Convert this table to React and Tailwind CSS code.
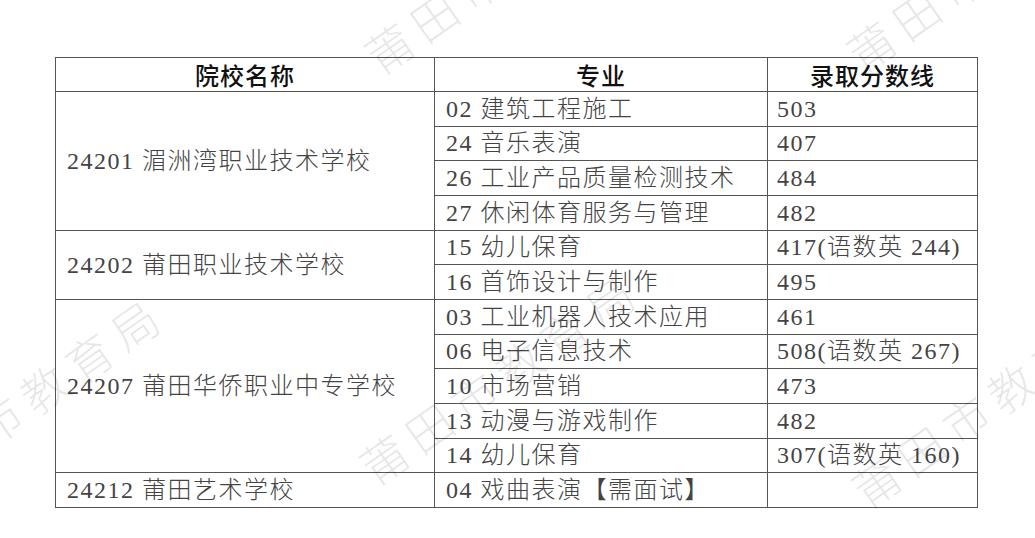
import React from "react";

const groups = [
  {
    school: "24201 湄洲湾职业技术学校",
    rows: [
      ["02 建筑工程施工", "503"],
      ["24 音乐表演", "407"],
      ["26 工业产品质量检测技术", "484"],
      ["27 休闲体育服务与管理", "482"],
    ],
  },
  {
    school: "24202 莆田职业技术学校",
    rows: [
      ["15 幼儿保育", "417(语数英 244)"],
      ["16 首饰设计与制作", "495"],
    ],
  },
  {
    school: "24207 莆田华侨职业中专学校",
    rows: [
      ["03 工业机器人技术应用", "461"],
      ["06 电子信息技术", "508(语数英 267)"],
      ["10 市场营销", "473"],
      ["13 动漫与游戏制作", "482"],
      ["14 幼儿保育", "307(语数英 160)"],
    ],
  },
  {
    school: "24212 莆田艺术学校",
    rows: [["04 戏曲表演【需面试】", ""]],
  },
];

// watermark anchors: centre of the first glyph
const marks = [
  [388, 47],
  [870, 45],
  [-92, 482],
  [383, 458],
  [875, 481],
];

const cell =
  "border border-[#555] py-0 leading-none whitespace-nowrap font-light font-['Liberation_Serif','Noto_Sans_CJK_SC',serif]";

export default function App() {
  return (
    <div className="relative w-[1035px] h-[538px] overflow-hidden bg-white">
      <div className="pt-[57px] pl-[55px]">
        <table className="table-fixed border-collapse w-[922px] text-[24px] tracking-[1.5px] text-[#444] font-['Liberation_Serif','Noto_Sans_CJK_SC',serif]">
          <colgroup>
            <col className="w-[379px]" />
            <col className="w-[333px]" />
            <col className="w-[210px]" />
          </colgroup>
          <thead>
            <tr className="h-[34px]">
              {["院校名称", "专业", "录取分数线"].map((h) => (
                <th
                  key={h}
                  className="border border-[#555] text-center font-medium text-[#111] leading-none p-0 tracking-[1px] font-['Noto_Sans_CJK_SC',sans-serif]"
                >
                  {h}
                </th>
              ))}
            </tr>
          </thead>
          <tbody>
            {groups.map((g) =>
              g.rows.map((r, i) => (
                <tr key={g.school + i} className="h-[34.67px]">
                  {i === 0 && (
                    <td rowSpan={g.rows.length} className={cell + " pl-[11px] align-middle border-[#444]"}>
                      {g.school}
                    </td>
                  )}
                  <td className={cell + " pl-[11px]"}>{r[0]}</td>
                  <td className={cell + " pl-[9px]"}>{r[1]}</td>
                </tr>
              ))
            )}
          </tbody>
        </table>
      </div>

      {/* watermark */}
      {marks.map(([x, y], i) => (
        <div
          key={i}
          className="pointer-events-none absolute whitespace-nowrap text-[46px] leading-[50px] tracking-[9px] text-black/10 font-light origin-[23px_25px] -rotate-[35deg] font-['Noto_Sans_CJK_SC',sans-serif]"
          style={{ left: x - 23, top: y - 25 }}
        >
          莆田市教育局
        </div>
      ))}
    </div>
  );
}
